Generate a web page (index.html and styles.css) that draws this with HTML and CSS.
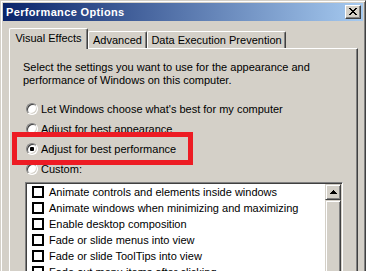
FILE: index.html
```html
<!DOCTYPE html>
<html>
<head>
<meta charset="utf-8">
<link rel="stylesheet" href="styles.css">
</head>
<body>
<div class="window">
  <div class="titlebar">
    <span class="title">Performance Options</span>
    <div class="close">
      <svg width="8" height="7" viewBox="0 0 8 7" shape-rendering="crispEdges"><path fill="#000" d="M0 0h2v1H0z M6 0h2v1H6z M1 1h2v1H1z M5 1h2v1H5z M2 2h4v1H2z M3 3h2v1H3z M2 4h4v1H2z M1 5h2v1H1z M5 5h2v1H5z M0 6h2v1H0z M6 6h2v1H6z"/></svg>
    </div>
  </div>
  <div class="tabs">
    <div class="tab active tab-visual">Visual Effects</div>
    <div class="tab tab-adv">Advanced</div>
    <div class="tab tab-dep">Data Execution Prevention</div>
  </div>
  <div class="panel">
    <p class="intro">Select the settings you want to use for the appearance and<br>performance of Windows on this computer.</p>
    <div class="radios">
      <div class="radio-row"><span class="radio"></span><span>Let Windows choose what's best for my computer</span></div>
      <div class="radio-row"><span class="radio"></span><span>Adjust for best appearance</span></div>
      <div class="radio-row"><span class="radio checked"></span><span>Adjust for best performance</span></div>
      <div class="radio-row"><span class="radio"></span><span>Custom:</span></div>
    </div>
    <div class="listbox">
      <div class="items">
        <div class="item"><span class="check"></span><span>Animate controls and elements inside windows</span></div>
        <div class="item"><span class="check"></span><span>Animate windows when minimizing and maximizing</span></div>
        <div class="item"><span class="check"></span><span>Enable desktop composition</span></div>
        <div class="item"><span class="check"></span><span>Fade or slide menus into view</span></div>
        <div class="item"><span class="check"></span><span>Fade or slide ToolTips into view</span></div>
        <div class="item"><span class="check"></span><span>Fade out menu items after clicking</span></div>
      </div>
      <div class="scrollbar">
        <div class="sb-btn">
          <svg width="7" height="4" viewBox="0 0 7 4" shape-rendering="crispEdges"><path fill="#000" d="M3 0h1v1H3z M2 1h3v1H2z M1 2h5v1H1z M0 3h7v1H0z"/></svg>
        </div>
        <div class="sb-thumb"></div>
      </div>
    </div>
  </div>
  <div class="highlight"></div>
</div>
</body>
</html>
```

FILE: styles.css
```css
html, body {
  margin: 0;
  padding: 0;
  width: 366px;
  height: 271px;
  overflow: hidden;
  background: #D4D0C8;
}
.window {
  position: relative;
  box-sizing: border-box;
  width: 366px;
  height: 300px;
  background: #D4D0C8;
  border: 1px solid;
  border-color: #D4D0C8 #404040 #404040 #D4D0C8;
  box-shadow: inset 1px 1px #fff, inset -1px -1px #808080;
  padding: 2px;
  font-family: "Liberation Sans", Arial, sans-serif;
  font-size: 11px;
  color: #000;
}
.titlebar {
  height: 18px;
  display: flex;
  align-items: center;
  justify-content: space-between;
  background: linear-gradient(to right, #0A246A, #A6CAF0);
  padding: 0 2px 0 3px;
}
.title {
  color: #fff;
  font-weight: bold;
  letter-spacing: 0.35px;
}
.close {
  box-sizing: border-box;
  width: 16px;
  height: 14px;
  background: #D4D0C8;
  border: 1px solid;
  border-color: #fff #404040 #404040 #fff;
  box-shadow: inset -1px -1px #808080;
  display: flex;
  align-items: center;
  justify-content: center;
  padding: 0 1px 1px 0;
}
.close svg { display: block; }
.tabs {
  display: flex;
  align-items: flex-end;
  height: 20px;
  margin: 7px 0 0 6px;
}
.tab {
  box-sizing: border-box;
  height: 17px;
  border: 1px solid;
  border-bottom: none;
  border-color: #fff #404040 #fff #fff;
  box-shadow: inset -1px 0 #808080;
  border-radius: 2px 2px 0 0;
  display: flex;
  align-items: center;
  justify-content: center;
  padding-bottom: 1px;
}
.tab.active {
  position: relative;
  z-index: 1;
  height: 21px;
  margin-bottom: -1px;
  background: #D4D0C8;
  padding-bottom: 3px;
}
.tab-visual { width: 79px; }
.tab-adv { width: 59px; }
.tab-dep { width: 139px; }
.panel {
  box-sizing: border-box;
  margin: 0 5px 0 6px;
  height: 260px;
  border: 1px solid;
  border-color: #fff #404040 #404040 #fff;
  box-shadow: inset -1px -1px #808080;
  padding: 12px 14px 0 13px;
}
.intro {
  margin: 0;
  line-height: 13px;
}
.radios {
  margin-top: 11px;
  padding-left: 3px;
}
.radio-row {
  height: 20px;
  display: flex;
  align-items: center;
  gap: 3px;
}
.radio-row:first-child {
  height: 21px;
  padding-top: 1px;
  box-sizing: border-box;
}
.radio {
  box-sizing: border-box;
  width: 12px;
  height: 12px;
  border-radius: 50%;
  background: #fff;
  border: 1px solid;
  border-color: #808080 #fff #fff #808080;
  box-shadow: inset 1px 1px #404040, inset -1px -1px #D4D0C8;
  display: flex;
  align-items: center;
  justify-content: center;
}
.radio.checked::after {
  content: "";
  width: 4px;
  height: 4px;
  border-radius: 1px;
  background: #000;
}
.listbox {
  box-sizing: border-box;
  margin: 3px 0 0 2px;
  height: 110px;
  display: flex;
  background: #fff;
  border: 1px solid;
  border-color: #808080 #fff #fff #808080;
  box-shadow: inset 1px 1px #404040, inset -1px -1px #D4D0C8;
  padding: 1px;
}
.items {
  flex: 1;
  padding-left: 5px;
}
.item {
  height: 16px;
  display: flex;
  align-items: center;
  gap: 5px;
  white-space: nowrap;
}
.check {
  box-sizing: border-box;
  width: 12px;
  height: 12px;
  border: 2px solid #000;
  background: #fff;
}
.scrollbar {
  width: 16px;
  display: flex;
  flex-direction: column;
}
.sb-btn, .sb-thumb {
  box-sizing: border-box;
  background: #D4D0C8;
  border: 1px solid;
  border-color: #D4D0C8 #404040 #404040 #D4D0C8;
  box-shadow: inset 1px 1px #fff, inset -1px -1px #808080;
}
.sb-btn {
  height: 16px;
  display: flex;
  align-items: center;
  justify-content: center;
}
.sb-btn svg { display: block; }
.sb-thumb {
  flex: 1;
}
.highlight {
  position: absolute;
  left: 11px;
  top: 131px;
  width: 181px;
  height: 33px;
  box-sizing: border-box;
  border: 5px solid #ED1C24;
}
```
